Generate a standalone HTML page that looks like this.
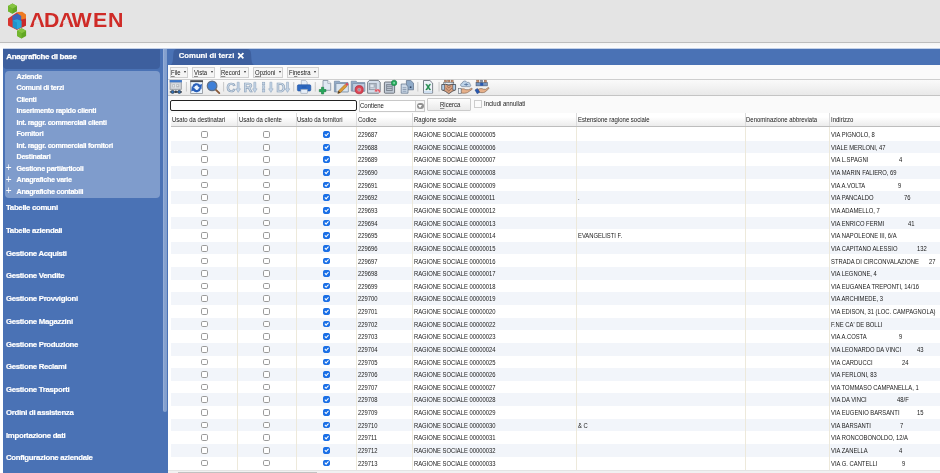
<!DOCTYPE html>
<html lang="it"><head><meta charset="utf-8"><title>Comuni di terzi</title>
<style>
*{box-sizing:border-box;margin:0;padding:0}
html,body{width:940px;height:473px;overflow:hidden;background:#fff;font-family:"Liberation Sans",Arial,sans-serif}
body{position:relative;will-change:transform}
#hdr{position:absolute;left:0;top:0;width:940px;height:43px;background:#e4e4e4;border-bottom:1px solid #bdbdbd}
#hdr2{position:absolute;left:0;top:43px;width:940px;height:6px;background:linear-gradient(#f4f4f4,#fff)}
#logo{position:absolute;left:4px;top:0}
#brand{position:absolute;left:26px;top:0}
#aa{position:absolute;left:3px;top:48px;width:937px;height:1px;background:#c3d0e7}
#blue{position:absolute;left:3px;top:49px;width:937px;height:16.3px;background:#4a72b5}
#side{position:absolute;left:3px;top:49px;width:165px;height:424px;background:#4a72b5}
#sh{position:absolute;left:0;top:0;width:156.8px;height:20px;background:#3d5f9e;border-radius:0 0 4px 4px;color:#fff;font-weight:bold;font-size:8px;letter-spacing:-0.3px;line-height:10px;padding:2.9px 0 0 3.3px;white-space:nowrap;-webkit-text-stroke:0.25px #fff}
#sp{position:absolute;left:1.5px;top:22.3px;width:155.4px;height:126.5px;background:#7f9ccc;border-radius:4px}
.si{position:absolute;left:16.5px;height:10px;line-height:10px;color:#fff;font-weight:bold;font-size:7.2px;letter-spacing:-0.3px;white-space:nowrap;-webkit-text-stroke:0.2px #fff}
.si .pl{position:absolute;left:-10.8px;top:-0.6px;font-weight:normal;font-size:10px;-webkit-text-stroke:0}
.mi{position:absolute;left:6px;height:12px;line-height:12px;color:#fff;font-weight:bold;font-size:7.8px;letter-spacing:-0.31px;white-space:nowrap;-webkit-text-stroke:0.2px #fff}
#thumb{position:absolute;left:162.6px;top:49px;width:4.8px;height:363.3px;background:linear-gradient(90deg,#9db4db,#86a2d0 35%,#809dcc);border-radius:0 0 2.4px 2.4px}
#tabs{position:absolute;left:166px;top:48px}
#tab{position:absolute;left:172px;top:49px;width:79px;height:15.8px;color:#fff;font-weight:bold;font-size:7.7px;line-height:10px;padding:2px 0 0 6.8px;white-space:nowrap;-webkit-text-stroke:0.2px #fff}
#tab b{position:absolute;left:64.8px;top:1.8px;font-size:8.5px}
#menubar{position:absolute;left:168px;top:65.3px;width:772px;height:13.7px;background:#fbfbfb}
.mb{position:absolute;top:67px;height:11px;border:1px solid #d0d0d0;background:#f5f5f5;font-size:6.8px;line-height:9px;color:#1a1a1a;padding-left:0.5px;white-space:nowrap}
.mb u,#btn u{text-decoration-thickness:0.5px;text-decoration-color:#8c8c8c;text-underline-offset:0.5px}
.mb i{position:absolute;right:1.5px;top:3.3px;width:0;height:0;border-left:1.4px solid transparent;border-right:1.4px solid transparent;border-top:2.5px solid #333;font-size:0}
#tb{position:absolute;left:168px;top:78.8px;width:772px;height:17px;background:linear-gradient(#fafafa,#e9e9e9);border-top:1px solid #cfcfcf;border-bottom:1px solid #c4c4c4}
#sr{position:absolute;left:168px;top:95.8px;width:772px;height:17px;background:#fafafa}
#q{position:absolute;left:170px;top:100.3px;width:186.6px;height:10.6px;border:1.2px solid #222;border-radius:2px;background:#fff}
#sel{position:absolute;left:358.5px;top:100.3px;width:66.7px;height:12px;border:1px solid #c8c8c8;background:#fff;font-size:6.8px;line-height:10.8px;padding-left:0.8px;color:#1a1a1a}
#sel span,#btn span,#ckl span,.mb span{display:inline-block;transform:scaleX(.88);transform-origin:0 50%;white-space:nowrap}
#dd{position:absolute;left:415.4px;top:101px;width:9px;height:10px;border-left:1px solid #cfcfcf;background:#f6f6f6}
#dd:before{content:"";position:absolute;left:0.9px;top:1.5px;width:6.4px;height:6.4px;border-radius:50%;background:#909090}
#dd:after{content:"";position:absolute;left:2px;top:3.5px;width:0;height:0;border-left:2.1px solid transparent;border-right:2.1px solid transparent;border-top:3.1px solid #fff}
#btn{position:absolute;left:427.2px;top:97.8px;width:44px;height:13.7px;border:1px solid #cbcbcb;border-radius:1px;background:linear-gradient(#fdfdfd,#eaeaea);font-size:6.8px;line-height:12.2px;text-align:left;padding-left:11.4px;color:#1a1a1a}
#ck{position:absolute;left:474px;top:100.4px;width:7.6px;height:8px;border:1px solid #cdcdcd;background:#fbfbfb}
#ckl{position:absolute;left:484.2px;top:100.3px;font-size:6.8px;line-height:8px;color:#1a1a1a;white-space:nowrap}
#th{position:absolute;left:170.6px;top:113px;width:769.4px;height:14px;background:linear-gradient(#fff 30%,#ececec);border-bottom:1px solid #bdbdbd}
#th i{position:absolute;top:0;width:1px;height:13px;background:#dcdcdc}
#th span{position:absolute;top:3.2px;font-size:6.8px;line-height:8px;color:#1a1a1a;white-space:nowrap;transform:scaleX(.88);transform-origin:0 50%}
.vs{position:absolute;top:127px;width:1px;height:343px;background:#ede9db}
.r{position:absolute;left:170.6px;width:769.4px;height:12.63px;font-size:6.8px;line-height:13.6px;color:#1a1a1a}
.r.o{background:#f2f5fa}
.r span{position:absolute;top:0;white-space:nowrap;margin-left:-170.6px;transform:scaleX(.86);transform-origin:0 50%}
.cb{position:absolute;top:3px;width:6.7px;height:6.7px;border:0.9px solid #9b9b9b;border-radius:1.7px;background:#fff;margin-left:-170.6px}
.cb.k{background:#1a6fe6;border-color:#1a6fe6}
.cb.k:after{content:"";position:absolute;left:-0.9px;top:-0.9px;width:6.7px;height:6.7px;background:#fff;clip-path:polygon(17% 50%,28% 39%,42% 54%,72% 21%,84% 32%,42% 78%)}
#hs{position:absolute;left:168px;top:470px;width:772px;height:3px;background:#f1f1f1;border-top:0.5px solid #e4e4e4}
#hs i{position:absolute;left:10.2px;top:0.6px;width:138.5px;height:3px;background:#c1c1c1}
.ic{position:absolute;top:1px}
.sep{position:absolute;top:3px;width:1px;height:10px;background:#bdbdbd}
</style></head><body>
<div id="hdr"></div><div id="hdr2"></div>
<svg id="logo" width="30" height="42" viewBox="4 0 30 42">
<polygon points="12.5,3.6 17,6.1 17,11.3 12.5,13.8 8,11.3 8,6.1" fill="#62a724"/>
<polygon points="12.5,3.6 17,6.1 12.5,8.7 8,6.1" fill="#86c440"/>
<polygon points="8,6.1 12.5,8.7 12.5,13.8 8,11.3" fill="#72b62e"/>
<polygon points="21.6,28.2 26.1,30.7 26.1,35.9 21.6,38.4 17.1,35.9 17.1,30.7" fill="#62a724"/>
<polygon points="21.6,28.2 26.1,30.7 21.6,33.3 17.1,30.7" fill="#86c440"/>
<polygon points="17.1,30.7 21.6,33.3 21.6,38.4 17.1,35.9" fill="#72b62e"/>
<polygon points="17,12.2 26,16.6 26,25.4 17,29.9 8,25.4 8,18.6" fill="#d7352f"/>
<polygon points="21.5,19 26,16.8 26,25.4 21.5,27.6" fill="#c92b2c"/>
<polygon points="17.6,12 22.2,11.8 26,14.6 26,18.6 21.6,19.6 17.6,16.6" fill="#ee7a22"/>
<polygon points="12.4,16 17.4,13.4 21.2,16 21.2,21.4 16,22.4 12.4,20.4" fill="#3a67bd"/>
<polygon points="12.8,20.6 17,19.2 21.6,21 21.6,27.2 17,29.6 12.8,27" fill="#27a6d9"/>
<polygon points="12.8,20.6 17,22.6 17,29.6 12.8,27" fill="#1f92cc"/>
</svg>
<svg id="brand" width="110" height="42" viewBox="26 0 110 42"><text transform="scale(1.1 1)" x="26.9 40.1 53.5 65.1 84.6 98.1" y="27" font-family="Liberation Sans, sans-serif" font-size="19.4" font-weight="bold" fill="#cf2b27">ADAWEN</text><polygon points="34.9,20.1 39.1,20.1 40.3,23.8 33.7,23.8" fill="#e4e4e4"/><polygon points="63.9,20.1 68.1,20.1 69.3,23.8 62.7,23.8" fill="#e4e4e4"/></svg>
<div id="aa"></div><div id="blue"></div>
<div id="side">
<div id="sh">Anagrafiche di base</div>
<div id="sp"></div>
</div>
<div id="sidetxt" style="position:absolute;left:0;top:0">
<div class="si" style="top:71.80px">Aziende</div>
<div class="si" style="top:83.32px">Comuni di terzi</div>
<div class="si" style="top:94.84px">Clienti</div>
<div class="si" style="top:106.36px">Inserimento rapido clienti</div>
<div class="si" style="top:117.88px">Int. raggr. commerciali clienti</div>
<div class="si" style="top:129.40px">Fornitori</div>
<div class="si" style="top:140.92px">Int. raggr. commerciali fornitori</div>
<div class="si" style="top:152.44px">Destinatari</div>
<div class="si" style="top:163.96px"><b class="pl">+</b>Gestione parti/articoli</div>
<div class="si" style="top:175.48px"><b class="pl">+</b>Anagrafiche varie</div>
<div class="si" style="top:187.00px"><b class="pl">+</b>Anagrafiche contabili</div>
<div class="mi" style="top:202.20px">Tabelle comuni</div>
<div class="mi" style="top:224.95px">Tabelle aziendali</div>
<div class="mi" style="top:247.70px">Gestione Acquisti</div>
<div class="mi" style="top:270.45px">Gestione Vendite</div>
<div class="mi" style="top:293.20px">Gestione Provvigioni</div>
<div class="mi" style="top:315.95px">Gestione Magazzini</div>
<div class="mi" style="top:338.70px">Gestione Produzione</div>
<div class="mi" style="top:361.45px">Gestione Reclami</div>
<div class="mi" style="top:384.20px">Gestione Trasporti</div>
<div class="mi" style="top:406.95px">Ordini di assistenza</div>
<div class="mi" style="top:429.70px">Importazione dati</div>
<div class="mi" style="top:452.45px">Configurazione aziendale</div>
</div>
<div id="thumb"></div>
<svg id="tabs" width="94" height="18" viewBox="166 48 94 18"><path d="M168.5,65.3 C172,65.3 172.7,62.5 173,58.5 L173.4,53.2 C173.7,50.4 175,49 177.6,49 L246.8,49 C249.4,49 250.7,50.4 251,53.2 L251.4,58.5 C251.7,62.5 252.4,65.3 255.9,65.3 Z" fill="#3d5f9e"/></svg>
<div id="tab">Comuni di terzi<b>✕</b></div>
<div id="menubar"></div>
<div class="mb" style="left:169.6px;width:18.6px"><span><u>F</u>ile</span><i>▼</i></div>
<div class="mb" style="left:192.4px;width:23px"><span><u>V</u>ista</span><i>▼</i></div>
<div class="mb" style="left:219.5px;width:29.2px"><span><u>R</u>ecord</span><i>▼</i></div>
<div class="mb" style="left:253.2px;width:30px"><span><u>O</u>pzioni</span><i>▼</i></div>
<div class="mb" style="left:287px;width:31.5px"><span>Fi<u>n</u>estra</span><i>▼</i></div>
<div id="tb"><svg id="ics" style="position:absolute;left:0;top:-2.8px" width="340" height="20" viewBox="168 77 340 20" font-family="Liberation Sans, sans-serif">
<g fill="#c3c3c3">
<rect x="185.9" y="82" width="0.9" height="9.5"/><rect x="223.2" y="82" width="0.9" height="9.5"/><rect x="293.3" y="82" width="0.9" height="9.5"/><rect x="314.8" y="82" width="0.9" height="9.5"/><rect x="417.4" y="82" width="0.9" height="9.5"/><rect x="438.6" y="82" width="0.9" height="9.5"/>
</g>
<!-- 1 network window -->
<g>
<rect x="170" y="80.4" width="11.6" height="9.2" fill="#c3c6cb" stroke="#8c9097" stroke-width="0.6"/>
<rect x="169.7" y="80.1" width="12.2" height="2.2" fill="#3f78c9"/>
<rect x="171.4" y="83.4" width="8.8" height="5" fill="#dfe2e6"/>
<rect x="172.2" y="84.2" width="2.8" height="3.2" fill="#b4b8be"/><rect x="176.2" y="84.2" width="3.2" height="3.2" fill="#b4b8be"/>
<rect x="172.9" y="84.9" width="1.4" height="1.8" fill="#e6e8eb"/><rect x="176.9" y="84.9" width="1.4" height="1.2" fill="#e6e8eb"/>
<rect x="175.2" y="89.7" width="1.3" height="1.8" fill="#8d9197"/>
<rect x="169.8" y="91.3" width="12.2" height="1.3" fill="#4b4f55"/>
<circle cx="172.6" cy="91.9" r="1.6" fill="#2f6fb8" stroke="#33373c" stroke-width="0.6"/><circle cx="179.3" cy="91.9" r="1.6" fill="#2f6fb8" stroke="#33373c" stroke-width="0.6"/>
<rect x="175" y="91" width="1.8" height="1.9" fill="#3a3e44"/>
</g>
<!-- 2 refresh window -->
<g>
<rect x="190.7" y="80.8" width="11.9" height="12.7" fill="#eaf4fd" stroke="#8b9097" stroke-width="0.8"/>
<rect x="190.3" y="80.3" width="12.7" height="1.8" fill="#4a4e55"/>
<g fill="none" stroke="#285fba" stroke-width="2.2">
<path d="M193.2 87.3A3.5 3.5 0 0 1 199.4 85.6"/>
<path d="M200 88.1A3.5 3.5 0 0 1 193.8 89.8"/>
</g>
<path d="M197.2 85.8l4.8 -1.8l-0.6 5.2z" fill="#285fba"/>
<path d="M196 89.6l-4.8 1.8l0.6 -5.2z" fill="#285fba"/>
</g>
<!-- 3 magnifier -->
<g>
<line x1="215.4" y1="89.4" x2="219.3" y2="93.1" stroke="#8a5a3a" stroke-width="1.9" stroke-linecap="round"/>
<circle cx="212.1" cy="85.9" r="4.8" fill="#3f80d8" stroke="#5f7087" stroke-width="1.2"/>
</g>
<!-- 4-7 letters with arrows -->
<g font-weight="bold" font-size="12.5" fill="#d2deeb" stroke="#8aa0b9" stroke-width="0.65">
<text x="226.6" y="91.8">C</text>
<text x="243.6" y="91.8">R</text>
<text x="276.2" y="91.8">D</text>
</g>
<g fill="#c4d4e6" stroke="#879eb8" stroke-width="0.5">
<path id="arw" d="M237.2 82.2h2v6.6h1.3l-2.3 3.6l-2.3 -3.6h1.3z"/>
<path d="M253.8 82.2h2v6.6h1.3l-2.3 3.6l-2.3 -3.6h1.3z"/>
<path d="M269.9 82.2h2v6.6h1.3l-2.3 3.6l-2.3 -3.6h1.3z"/>
<path d="M286.5 82.2h2v6.6h1.3l-2.3 3.6l-2.3 -3.6h1.3z"/>
<rect x="262.6" y="82.2" width="2.2" height="2.6"/><rect x="262.6" y="85.8" width="2.2" height="2.6"/><rect x="262.6" y="89.4" width="2.2" height="2.6"/>
</g>
<!-- 8 printer -->
<g>
<path d="M301.3 80.4h4.2l1.7 1.7v3.4h-5.9z" fill="#e6eef8" stroke="#8593a5" stroke-width="0.5"/>
<rect x="297.4" y="84.8" width="13.4" height="6.2" rx="1.2" fill="#2d69c2" stroke="#1f4f9c" stroke-width="0.6"/>
<rect x="300.9" y="89.3" width="6.6" height="3.9" fill="#e6eef8" stroke="#8593a5" stroke-width="0.5"/>
<rect x="301.8" y="86.4" width="4.6" height="1.2" fill="#255cae"/>
</g>
<!-- 9 new doc -->
<g>
<path d="M323 80.5h4.8l2.9 2.9v6.9h-7.7z" fill="#dfe8f3" stroke="#717f93" stroke-width="0.7"/>
<path d="M327.8 80.5v2.9h2.9" fill="#f4f7fb" stroke="#717f93" stroke-width="0.5"/>
<path d="M321.5 87.3h2.2v2.2h2.2v2.2h-2.2v2.2h-2.2v-2.2h-2.2v-2.2h2.2z" fill="#25a85a" stroke="#187a40" stroke-width="0.6"/>
</g>
<!-- 10 folder pencil -->
<g>
<path d="M334.4 81.2h5l1 1.3h7.6v9.4h-13.6z" fill="#93abc8" stroke="#677d99" stroke-width="0.6"/>
<rect x="336" y="83.7" width="12.2" height="8.2" fill="#d9e4f0" stroke="#74899f" stroke-width="0.6"/>
<path d="M337.8 93.5l0.7 -2.7l6.7 -6.5l1.9 1.9l-6.7 6.5z" fill="#dc9a35" stroke="#8f6320" stroke-width="0.5"/>
<path d="M345.2 84.3l1 -1a0.9 0.9 0 0 1 1.4 0l0.5 0.5a0.9 0.9 0 0 1 0 1.3l-1 1z" fill="#e0485a"/>
<path d="M337.8 93.5l0.7 -2.7l1.9 1.9z" fill="#4f3d2a"/>
</g>
<!-- 11 folder red circle -->
<g>
<path d="M351.2 81.2h5l1 1.3h7.6v8.6h-13.6z" fill="#93abc8" stroke="#677d99" stroke-width="0.6"/>
<rect x="352.8" y="83.7" width="12" height="7.4" fill="#bccbde" stroke="#74899f" stroke-width="0.6"/>
<circle cx="359.2" cy="89.7" r="4.1" fill="#db4353" stroke="#a92a3a" stroke-width="0.7"/>
<circle cx="359.2" cy="89.7" r="2" fill="#e58c96"/>
<rect x="358.2" y="88.7" width="2" height="2" fill="#8f99a5"/>
</g>
<!-- 12 doc search -->
<g>
<path d="M367.6 82.2l1.8 -1.8h8.8l2 1.8v9.4l-1.6 1.6h-11z" fill="#d3dde9" stroke="#5c646e" stroke-width="0.8"/>
<rect x="369.2" y="83.4" width="7" height="6.4" fill="#aab4c0" stroke="#7a848f" stroke-width="0.5"/>
<rect x="370.4" y="84.6" width="3.2" height="2.4" fill="#dfe6ee"/>
<rect x="370.4" y="87.8" width="4.6" height="0.8" fill="#dfe6ee"/>
<path d="M376.2 89.6c2.4 -1.4 4.6 0.2 4 3.2l-1.6 -0.6c0.2 -1.2 -0.5 -1.8 -1.6 -1.4l0.7 1.2l-3.2 -0.4l1 -3z" fill="#e04f5c" stroke="#f4d6d9" stroke-width="0.3"/>
</g>
<!-- 13 doc green dot -->
<g>
<rect x="384.4" y="82" width="10.2" height="11.2" rx="0.8" fill="#c3cdd9" stroke="#555c65" stroke-width="0.8"/>
<rect x="386.1" y="84.1" width="6.6" height="7" fill="#7f8894"/>
<rect x="387.1" y="85.3" width="4.6" height="0.9" fill="#c3cdd9"/><rect x="387.1" y="87.2" width="4.6" height="0.9" fill="#c3cdd9"/><rect x="387.1" y="89.1" width="4.6" height="0.9" fill="#c3cdd9"/>
<circle cx="394.1" cy="82.9" r="2.7" fill="#27ae60" stroke="#187a40" stroke-width="0.6"/>
<circle cx="394.1" cy="82.9" r="0.9" fill="#9fe3bb"/>
</g>
<!-- 14 copy docs -->
<g>
<path d="M406.4 80.5h4.4l2.7 2.6v6.7h-7.1z" fill="#8faac8" stroke="#5d7088" stroke-width="0.7"/>
<path d="M401.2 84h4.4l2.4 2.4v6.8h-6.8z" fill="#cdd9e7" stroke="#5d7088" stroke-width="0.7"/>
<rect x="402.6" y="87.4" width="3.8" height="0.8" fill="#7f91a8"/><rect x="402.6" y="89.1" width="3.8" height="0.8" fill="#7f91a8"/><rect x="402.6" y="90.8" width="3.8" height="0.8" fill="#7f91a8"/>
<rect x="409.8" y="86.4" width="1.6" height="1.6" fill="#33455f"/>
</g>
<!-- 15 excel -->
<g>
<path d="M423.5 80.5h6.4l2.7 2.6v10h-9.1z" fill="#eef3f9" stroke="#5c646e" stroke-width="0.8"/>
<rect x="423.9" y="91" width="8.3" height="2.1" fill="#cfe0f2"/>
<path d="M425.6 84.2h1.5l1.1 1.8l1.1 -1.8h1.5l-1.85 2.8l1.85 2.9h-1.5l-1.1 -1.9l-1.1 1.9h-1.5l1.85 -2.9z" fill="#1f9450" stroke="#166f3b" stroke-width="0.3"/>
</g>
<!-- 16 handshake -->
<g>
<rect x="444.4" y="80.1" width="2.2" height="2.4" fill="#c98f6b" stroke="#6b4a38" stroke-width="0.3"/><rect x="447.7" y="80.1" width="2.2" height="2.4" fill="#c98f6b" stroke="#6b4a38" stroke-width="0.3"/><rect x="451" y="80.1" width="2.2" height="2.4" fill="#c98f6b" stroke="#6b4a38" stroke-width="0.3"/>
<rect x="443.8" y="82.2" width="10" height="2.6" fill="#e9eef4" stroke="#3a4048" stroke-width="0.5"/>
<path d="M442 84.8l3.6 -0.6l3.2 1.2l3.2 -1.2l3.6 0.6v5l-3.4 1.6l-3.4 2.4l-3.4 -2.4l-3.4 -1.6z" fill="#d6a080" stroke="#33383f" stroke-width="0.7"/>
<rect x="441.9" y="84.6" width="2.8" height="5.4" fill="#b5d0ea" stroke="#33383f" stroke-width="0.5"/>
<rect x="452.9" y="84.6" width="2.8" height="5.4" fill="#b5d0ea" stroke="#33383f" stroke-width="0.5"/>
<path d="M445.6 88l3.2 3l3.2 -3M447 86.4l1.8 1.4l1.8 -1.4" fill="none" stroke="#8a5d47" stroke-width="0.7"/>
</g>
<!-- 17 hand cloud -->
<g>
<path d="M461.8 86.6a1.8 1.8 0 0 1 0.4 -3.5a2.6 2.6 0 0 1 4.9 -0.6a2 2 0 0 1 3 1.8a1.3 1.3 0 0 1 -0.5 2.4z" fill="#bdd3e8" stroke="#66788e" stroke-width="0.6"/>
<path d="M464.2 84.5h4M466.2 83.1v2.8" stroke="#4a6a96" stroke-width="0.7"/>
<path d="M460.8 89.3c2 -0.8 3.6 -0.6 5 0.4l2.8 0l3 -1.4c0.8 0 0.9 0.8 0.2 1.3l-4.2 2.9c-2 1 -4.4 0.8 -6.8 0.4z" fill="#e6b08a" stroke="#7a5a45" stroke-width="0.6"/>
<rect x="458.5" y="88.5" width="2.6" height="4.8" fill="#eef3f9" stroke="#5c646e" stroke-width="0.6"/>
</g>
<!-- 18 hand people -->
<g>
<rect x="476.6" y="80.1" width="2.4" height="2.6" fill="#c98f6b" stroke="#6b4a38" stroke-width="0.3"/><rect x="480.4" y="80.1" width="2.4" height="2.6" fill="#8a94a8" stroke="#4a5668" stroke-width="0.3"/><rect x="484.2" y="80.1" width="2.4" height="2.6" fill="#c98f6b" stroke="#6b4a38" stroke-width="0.3"/>
<rect x="476" y="82.6" width="11.4" height="3.3" fill="#7896c0" stroke="#414c5e" stroke-width="0.5"/>
<rect x="480.2" y="82.9" width="3" height="2.8" fill="#2858b0"/>
<path d="M478 89.5c2 -1.2 4 -1.2 5.6 -0.2l2.2 0l2.4 -1.8c0.9 -0.1 1 0.8 0.4 1.4l-3.6 3.2c-1.8 0.8 -3.8 0.6 -5.8 0.2z" fill="#e6b08a" stroke="#7a5a45" stroke-width="0.6"/>
<path d="M475 90l2.4 -1.6l2.2 3.8l-2.4 1.6z" fill="#2858b0" stroke="#1c3f7e" stroke-width="0.5"/>
</g>
</svg>
</div>
<div id="sr"></div>
<div id="q"></div>
<div id="sel"><span>Contiene</span></div><div id="dd"></div>
<div id="btn"><span><u>R</u>icerca</span></div>
<div id="ck"></div><div id="ckl"><span>Includi annullati</span></div>
<div id="th">
<span style="left:1.2px">Usato da destinatari</span><span style="left:68.2px">Usato da cliente</span><span style="left:126.6px">Usato da fornitori</span><span style="left:187.1px">Codice</span><span style="left:243.2px">Ragione sociale</span><span style="left:407.3px">Estensione ragione sociale</span><span style="left:575.9px">Denominazione abbreviata</span><span style="left:660.4px">Indirizzo</span><i style="left:66.5px"></i><i style="left:125.0px"></i><i style="left:185.4px"></i><i style="left:241.6px"></i><i style="left:405.6px"></i><i style="left:574.1px"></i><i style="left:658.4px"></i>
</div>
<div class="r" style="top:128.20px"><i class="cb" style="left:201px"></i><i class="cb" style="left:263.3px"></i><i class="cb k" style="left:323.2px"></i><span style="left:357.5px">229687</span><span style="left:413.6px">RAGIONE SOCIALE 00000005</span><span style="left:831px">VIA PIGNOLO, 8</span></div>
<div class="r o" style="top:140.83px"><i class="cb" style="left:201px"></i><i class="cb" style="left:263.3px"></i><i class="cb k" style="left:323.2px"></i><span style="left:357.5px">229688</span><span style="left:413.6px">RAGIONE SOCIALE 00000006</span><span style="left:831px">VIALE MERLONI, 47</span></div>
<div class="r" style="top:153.46px"><i class="cb" style="left:201px"></i><i class="cb" style="left:263.3px"></i><i class="cb k" style="left:323.2px"></i><span style="left:357.5px">229689</span><span style="left:413.6px">RAGIONE SOCIALE 00000007</span><span style="left:831px">VIA L.SPAGNI</span><span style="left:899px">4</span></div>
<div class="r o" style="top:166.09px"><i class="cb" style="left:201px"></i><i class="cb" style="left:263.3px"></i><i class="cb k" style="left:323.2px"></i><span style="left:357.5px">229690</span><span style="left:413.6px">RAGIONE SOCIALE 00000008</span><span style="left:831px">VIA MARIN FALIERO, 69</span></div>
<div class="r" style="top:178.72px"><i class="cb" style="left:201px"></i><i class="cb" style="left:263.3px"></i><i class="cb k" style="left:323.2px"></i><span style="left:357.5px">229691</span><span style="left:413.6px">RAGIONE SOCIALE 00000009</span><span style="left:831px">VIA A.VOLTA</span><span style="left:898px">9</span></div>
<div class="r o" style="top:191.35px"><i class="cb" style="left:201px"></i><i class="cb" style="left:263.3px"></i><i class="cb k" style="left:323.2px"></i><span style="left:357.5px">229692</span><span style="left:413.6px">RAGIONE SOCIALE 00000011</span><span style="left:578px">.</span><span style="left:831px">VIA PANCALDO</span><span style="left:904px">76</span></div>
<div class="r" style="top:203.98px"><i class="cb" style="left:201px"></i><i class="cb" style="left:263.3px"></i><i class="cb k" style="left:323.2px"></i><span style="left:357.5px">229693</span><span style="left:413.6px">RAGIONE SOCIALE 00000012</span><span style="left:831px">VIA ADAMELLO, 7</span></div>
<div class="r o" style="top:216.61px"><i class="cb" style="left:201px"></i><i class="cb" style="left:263.3px"></i><i class="cb k" style="left:323.2px"></i><span style="left:357.5px">229694</span><span style="left:413.6px">RAGIONE SOCIALE 00000013</span><span style="left:831px">VIA ENRICO FERMI</span><span style="left:908px">41</span></div>
<div class="r" style="top:229.24px"><i class="cb" style="left:201px"></i><i class="cb" style="left:263.3px"></i><i class="cb k" style="left:323.2px"></i><span style="left:357.5px">229695</span><span style="left:413.6px">RAGIONE SOCIALE 00000014</span><span style="left:578px">EVANGELISTI F.</span><span style="left:831px">VIA NAPOLEONE III, 6/A</span></div>
<div class="r o" style="top:241.87px"><i class="cb" style="left:201px"></i><i class="cb" style="left:263.3px"></i><i class="cb k" style="left:323.2px"></i><span style="left:357.5px">229696</span><span style="left:413.6px">RAGIONE SOCIALE 00000015</span><span style="left:831px">VIA CAPITANO ALESSIO</span><span style="left:917px">132</span></div>
<div class="r" style="top:254.50px"><i class="cb" style="left:201px"></i><i class="cb" style="left:263.3px"></i><i class="cb k" style="left:323.2px"></i><span style="left:357.5px">229697</span><span style="left:413.6px">RAGIONE SOCIALE 00000016</span><span style="left:831px">STRADA DI CIRCONVALAZIONE</span><span style="left:929px">27</span></div>
<div class="r o" style="top:267.13px"><i class="cb" style="left:201px"></i><i class="cb" style="left:263.3px"></i><i class="cb k" style="left:323.2px"></i><span style="left:357.5px">229698</span><span style="left:413.6px">RAGIONE SOCIALE 00000017</span><span style="left:831px">VIA LEGNONE, 4</span></div>
<div class="r" style="top:279.76px"><i class="cb" style="left:201px"></i><i class="cb" style="left:263.3px"></i><i class="cb k" style="left:323.2px"></i><span style="left:357.5px">229699</span><span style="left:413.6px">RAGIONE SOCIALE 00000018</span><span style="left:831px">VIA EUGANEA TREPONTI, 14/16</span></div>
<div class="r o" style="top:292.39px"><i class="cb" style="left:201px"></i><i class="cb" style="left:263.3px"></i><i class="cb k" style="left:323.2px"></i><span style="left:357.5px">229700</span><span style="left:413.6px">RAGIONE SOCIALE 00000019</span><span style="left:831px">VIA ARCHIMEDE, 3</span></div>
<div class="r" style="top:305.02px"><i class="cb" style="left:201px"></i><i class="cb" style="left:263.3px"></i><i class="cb k" style="left:323.2px"></i><span style="left:357.5px">229701</span><span style="left:413.6px">RAGIONE SOCIALE 00000020</span><span style="left:831px">VIA EDISON, 31 (LOC. CAMPAGNOLA)</span></div>
<div class="r o" style="top:317.65px"><i class="cb" style="left:201px"></i><i class="cb" style="left:263.3px"></i><i class="cb k" style="left:323.2px"></i><span style="left:357.5px">229702</span><span style="left:413.6px">RAGIONE SOCIALE 00000022</span><span style="left:831px">F.NE CA' DE BOLLI</span></div>
<div class="r" style="top:330.28px"><i class="cb" style="left:201px"></i><i class="cb" style="left:263.3px"></i><i class="cb k" style="left:323.2px"></i><span style="left:357.5px">229703</span><span style="left:413.6px">RAGIONE SOCIALE 00000023</span><span style="left:831px">VIA A.COSTA</span><span style="left:899px">9</span></div>
<div class="r o" style="top:342.91px"><i class="cb" style="left:201px"></i><i class="cb" style="left:263.3px"></i><i class="cb k" style="left:323.2px"></i><span style="left:357.5px">229704</span><span style="left:413.6px">RAGIONE SOCIALE 00000024</span><span style="left:831px">VIA LEONARDO DA VINCI</span><span style="left:917px">43</span></div>
<div class="r" style="top:355.54px"><i class="cb" style="left:201px"></i><i class="cb" style="left:263.3px"></i><i class="cb k" style="left:323.2px"></i><span style="left:357.5px">229705</span><span style="left:413.6px">RAGIONE SOCIALE 00000025</span><span style="left:831px">VIA CARDUCCI</span><span style="left:902px">24</span></div>
<div class="r o" style="top:368.17px"><i class="cb" style="left:201px"></i><i class="cb" style="left:263.3px"></i><i class="cb k" style="left:323.2px"></i><span style="left:357.5px">229706</span><span style="left:413.6px">RAGIONE SOCIALE 00000026</span><span style="left:831px">VIA FERLONI, 83</span></div>
<div class="r" style="top:380.80px"><i class="cb" style="left:201px"></i><i class="cb" style="left:263.3px"></i><i class="cb k" style="left:323.2px"></i><span style="left:357.5px">229707</span><span style="left:413.6px">RAGIONE SOCIALE 00000027</span><span style="left:831px">VIA TOMMASO CAMPANELLA, 1</span></div>
<div class="r o" style="top:393.43px"><i class="cb" style="left:201px"></i><i class="cb" style="left:263.3px"></i><i class="cb k" style="left:323.2px"></i><span style="left:357.5px">229708</span><span style="left:413.6px">RAGIONE SOCIALE 00000028</span><span style="left:831px">VIA DA VINCI</span><span style="left:897px">48/F</span></div>
<div class="r" style="top:406.06px"><i class="cb" style="left:201px"></i><i class="cb" style="left:263.3px"></i><i class="cb k" style="left:323.2px"></i><span style="left:357.5px">229709</span><span style="left:413.6px">RAGIONE SOCIALE 00000029</span><span style="left:831px">VIA EUGENIO BARSANTI</span><span style="left:917px">15</span></div>
<div class="r o" style="top:418.69px"><i class="cb" style="left:201px"></i><i class="cb" style="left:263.3px"></i><i class="cb k" style="left:323.2px"></i><span style="left:357.5px">229710</span><span style="left:413.6px">RAGIONE SOCIALE 00000030</span><span style="left:578px">&amp; C</span><span style="left:831px">VIA BARSANTI</span><span style="left:900px">7</span></div>
<div class="r" style="top:431.32px"><i class="cb" style="left:201px"></i><i class="cb" style="left:263.3px"></i><i class="cb k" style="left:323.2px"></i><span style="left:357.5px">229711</span><span style="left:413.6px">RAGIONE SOCIALE 00000031</span><span style="left:831px">VIA RONCOBONOLDO, 12/A</span></div>
<div class="r o" style="top:443.95px"><i class="cb" style="left:201px"></i><i class="cb" style="left:263.3px"></i><i class="cb k" style="left:323.2px"></i><span style="left:357.5px">229712</span><span style="left:413.6px">RAGIONE SOCIALE 00000032</span><span style="left:831px">VIA ZANELLA</span><span style="left:899px">4</span></div>
<div class="r" style="top:456.58px"><i class="cb" style="left:201px"></i><i class="cb" style="left:263.3px"></i><i class="cb k" style="left:323.2px"></i><span style="left:357.5px">229713</span><span style="left:413.6px">RAGIONE SOCIALE 00000033</span><span style="left:831px">VIA G. CANTELLI</span><span style="left:902px">9</span></div>
<div class="vs" style="left:237.1px"></div><div class="vs" style="left:295.6px"></div><div class="vs" style="left:356px"></div><div class="vs" style="left:412.2px"></div><div class="vs" style="left:576.2px"></div><div class="vs" style="left:744.7px"></div><div class="vs" style="left:829px"></div>
<div id="hs"><i></i></div>
</body></html>
